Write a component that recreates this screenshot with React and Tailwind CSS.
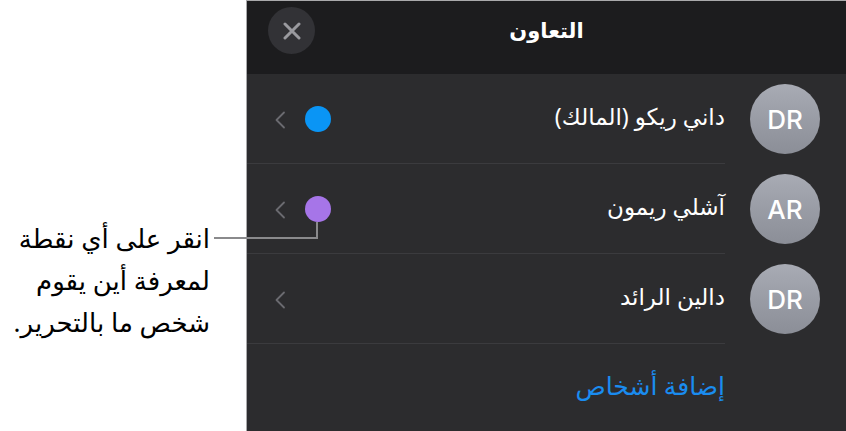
import React from 'react';

const people = [
  { initials: 'DR', name: 'داني ريكو (المالك)', dot: 'bg-[#0a95f5]' },
  { initials: 'AR', name: 'آشلي ريمون', dot: 'bg-[#a675e8]' },
  { initials: 'DR', name: 'دالين الرائد', dot: null },
];

function Chevron() {
  return (
    <svg width="12" height="18" viewBox="0 0 12 18" fill="none">
      <polyline points="10,1.5 2.5,9 10,16.5" stroke="#6b6b70" strokeWidth="1.8" strokeLinecap="round" strokeLinejoin="round" />
    </svg>
  );
}

function PersonRow({ person }) {
  return (
    <div className="flex h-[90px] items-stretch">
      {/* Avatar */}
      <div className="flex items-center pr-[26px] pl-[25px]">
        <div className="flex h-[70px] w-[70px] items-center justify-center rounded-full bg-gradient-to-b from-[#a8abb4] to-[#8b8e97]">
          <span className="text-[26px] font-medium text-white" style={{ fontFamily: 'Inter, Roboto, sans-serif' }}>{person.initials}</span>
        </div>
      </div>
      {/* Name, dot, chevron */}
      <div className="flex flex-1 items-center border-b border-[#3b3b3e] pl-[27px]">
        <span className="pb-[4px] text-[23px] text-white">{person.name}</span>
        <div className="flex-1"></div>
        {person.dot && <div className={`h-[26px] w-[26px] rounded-full ${person.dot}`}></div>}
        <div className="mr-[19px] flex items-center pt-[2px]">
          <Chevron />
        </div>
      </div>
    </div>
  );
}

export default function App() {
  return (
    <div className="relative flex h-[431px] w-[846px] overflow-hidden bg-white" style={{ fontFamily: '"Noto Sans", "DejaVu Sans", sans-serif' }}>
      {/* Callout text */}
      <div className="w-[246px] shrink-0 pr-[36px] pt-[217px]" dir="rtl">
        <p className="text-right text-[26px] leading-[42px] text-black">
          انقر على أي نقطة
          <br />
          لمعرفة أين يقوم
          <br />
          شخص ما بالتحرير.
        </p>
      </div>

      {/* Collaboration panel */}
      <div className="flex flex-1 flex-col border-l border-t border-[#a9a9ab] bg-[#2c2c2e]" dir="rtl">
        {/* Header */}
        <div className="relative flex h-[73px] shrink-0 items-start justify-center bg-[#1c1c1e] pt-[14px]">
          <h1 className="text-[21px] font-bold text-white">التعاون</h1>
          <button className="absolute left-[21px] top-[6px] flex h-[47px] w-[47px] items-center justify-center rounded-full bg-[#323236]">
            <svg width="18" height="18" viewBox="0 0 18 18">
              <path d="M2 2 L16 16 M16 2 L2 16" stroke="#9a9a9f" strokeWidth="3" strokeLinecap="round" />
            </svg>
          </button>
        </div>

        {people.map((p, i) => (
          <PersonRow key={i} person={p} />
        ))}

        {/* Add people */}
        <div className="flex flex-1 items-center pr-[121px] pb-[4px]">
          <span className="text-[25px] text-[#1a8cf0]">إضافة أشخاص</span>
        </div>
      </div>

      {/* Leader line from callout to dot */}
      <div className="absolute left-[214px] top-[237px] h-[2px] w-[104px] bg-[#8a8a8c]"></div>
      <div className="absolute left-[316px] top-[222px] h-[17px] w-[2px] bg-[#8a8a8c]"></div>
    </div>
  );
}
